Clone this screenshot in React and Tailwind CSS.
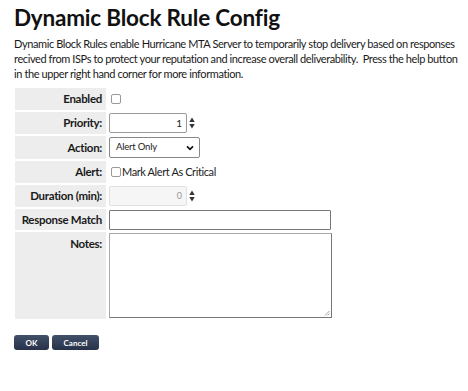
import React from "react";

function Spinner() {
  return (
    <svg width="6" height="12" viewBox="0 0 6 12" className="ml-[2px]">
      <path d="M3 0.5 L5.7 5 L0.3 5 Z" fill="#333" />
      <path d="M3 11.5 L5.7 7 L0.3 7 Z" fill="#333" />
    </svg>
  );
}

function Label({ children, tall, h }) {
  return (
    <div className={`bg-[#ededed] flex justify-end pr-[4px] font-bold text-[11.5px] tracking-[-0.3px] text-[#1a1a1a] ${h} ${tall ? "items-start pt-[3px]" : "items-center"}`}>
      {children}
    </div>
  );
}

export default function App() {
  return (
    <div className="w-[468px] h-[391px] bg-white text-[#111] pl-[14px] pt-[3px]" style={{ fontFamily: '"Lato", "Noto Sans", sans-serif' }}>
      <h1 className="text-[22.5px] font-bold leading-[30px] tracking-[-0.2px] text-[#111]">Dynamic Block Rule Config</h1>
      <p className="text-[11px] leading-[15px] mt-[3px] tracking-[-0.4px] whitespace-nowrap text-[#1a1a1a]">
        Dynamic Block Rules enable Hurricane MTA Server to temporarily stop delivery based on responses<br />
        recived from ISPs to protect your reputation and increase overall deliverability.&nbsp; Press the help button<br />
        in the upper right hand corner for more information.
      </p>
      <div className="grid grid-cols-[91px_1fr] gap-x-[2px] gap-y-[2px] mt-[7px] ml-[1px] w-[330px]">
        <Label h="h-[22px]">Enabled</Label>
        <div className="flex items-center pl-[3px]">
          <span className="w-[10px] h-[10px] border border-[#999] rounded-[2px] bg-white" />
        </div>

        <Label h="h-[22px]">Priority:</Label>
        <div className="flex items-center pl-[1px]">
          <div className="w-[78px] h-[20px] border border-[#999] rounded-[2px] flex items-center justify-end pr-[4px] text-[10px] text-[#222]">1</div>
          <Spinner />
        </div>

        <Label h="h-[23px]">Action:</Label>
        <div className="flex items-center pl-[1px]">
          <div className="w-[91px] h-[21px] border border-[#888] rounded-[2px] flex items-center justify-between pl-[6px] pr-[5px] text-[9.5px] tracking-[-0.2px] text-[#222]">
            <span>Alert Only</span>
            <svg width="8" height="6" viewBox="0 0 8 6"><path d="M1 1.3 L4 4.3 L7 1.3" stroke="#111" strokeWidth="1.7" fill="none" /></svg>
          </div>
        </div>

        <Label h="h-[22px]">Alert:</Label>
        <div className="flex items-center pl-[3px] text-[11px] tracking-[-0.4px] text-[#222]">
          <span className="w-[10px] h-[10px] border border-[#999] rounded-[2px] bg-white mr-[1px]" />
          <span>Mark Alert As Critical</span>
        </div>

        <Label h="h-[22px]">Duration (min):</Label>
        <div className="flex items-center pl-[1px]">
          <div className="w-[78px] h-[20px] border border-[#e0e0e0] bg-[#f6f6f6] rounded-[2px] flex items-center justify-end pr-[4px] text-[9px] text-[#999]">0</div>
          <Spinner />
        </div>

        <Label h="h-[21px]">Response Match</Label>
        <div className="flex items-center pl-[1px]">
          <div className="w-[222px] h-[20px] border border-[#777] rounded-[1px] bg-white" />
        </div>

        <Label tall h="h-[87px]">Notes:</Label>
        <div className="flex items-center pl-[1px]">
          <div className="w-[223px] h-[85px] border border-[#777] border-t-[#aaa] border-l-[#aaa] rounded-[1px] bg-white relative">
            <svg width="6" height="6" viewBox="0 0 6 6" className="absolute right-[1px] bottom-[1px]">
              <path d="M5.5 1 L1 5.5 M5.5 3.5 L3.5 5.5" stroke="#888" strokeWidth="0.8" />
            </svg>
          </div>
        </div>
      </div>
      <div className="flex gap-[3px] mt-[16px]">
        <button className="w-[35px] h-[15px] rounded-[3px] bg-gradient-to-b from-[#415068] to-[#27324a] text-white text-[8px] font-bold flex items-center justify-center">OK</button>
        <button className="w-[47px] h-[15px] rounded-[3px] bg-gradient-to-b from-[#415068] to-[#27324a] text-white text-[8px] font-bold flex items-center justify-center">Cancel</button>
      </div>
    </div>
  );
}
